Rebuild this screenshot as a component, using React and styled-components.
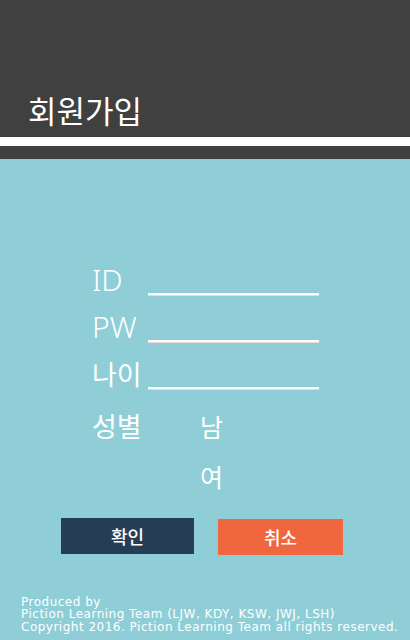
import React from "react";
import styled, { createGlobalStyle } from "styled-components";

const Global = createGlobalStyle`
  html, body { margin: 0; padding: 0; }
  body {
    width: 410px;
    height: 640px;
    overflow: hidden;
    background: #8fced6;
    font-family: "Noto Sans CJK KR", "Noto Sans", sans-serif;
  }
`;

const Page = styled.div`
  display: flex;
  flex-direction: column;
  width: 410px;
  height: 640px;
`;

const Header = styled.header`
  height: 137px;
  background: #404040;
  display: flex;
  align-items: flex-end;
  padding: 0 0 12px 28px;
  box-sizing: border-box;
`;

const Title = styled.h1`
  margin: 0;
  color: #ffffff;
  font-size: 31px;
  font-weight: 400;
  line-height: 1;
`;

const Stripe = styled.div`
  height: 9px;
  background: #ffffff;
`;

const Band = styled.div`
  height: 13px;
  background: #404040;
`;

const Main = styled.main`
  flex: 1;
  background: #8fced6;
  display: flex;
  flex-direction: column;
  padding: 97px 0 0 0;
  box-sizing: border-box;
`;

const Form = styled.form`
  display: grid;
  grid-template-columns: 56px 171px;
  grid-auto-rows: 47px;
  margin-left: 92px;
`;

const Label = styled.label`
  color: #ffffff;
  font-size: ${(p) => (p.$latin ? "30px" : "27px")};
  font-weight: ${(p) => (p.$latin ? 300 : 400)};
  line-height: 47px;
  font-family: ${(p) =>
    p.$latin ? '"Noto Sans", sans-serif' : '"Noto Sans CJK KR", sans-serif'};
`;

const Line = styled.div`
  align-self: end;
  margin-bottom: 8px;
  height: 2px;
  background: #ffffff;
  box-shadow: 0 1px 0 #e8d8d8;
`;

const GenderRow = styled.div`
  display: grid;
  grid-template-columns: 108px auto;
  margin-left: 92px;
  margin-top: 7px;
`;

const GenderLabel = styled.div`
  color: #ffffff;
  font-size: 27px;
  line-height: 44px;
`;

const Options = styled.div`
  display: flex;
  flex-direction: column;
  gap: 6px;
`;

const Option = styled.div`
  color: #ffffff;
  font-size: 25px;
  line-height: 44px;
`;

const Buttons = styled.div`
  display: flex;
  gap: 24px;
  margin: 20px 0 0 61px;
`;

const Button = styled.button`
  width: ${(p) => (p.$variant === "cancel" ? "125px" : "133px")};
  height: 36px;
  margin-top: ${(p) => (p.$variant === "cancel" ? "1px" : "0")};
  border: none;
  background: ${(p) => (p.$variant === "cancel" ? "#f0663e" : "#263d56")};
  color: #ffffff;
  font-family: "Noto Sans CJK KR", sans-serif;
  font-size: 18px;
  font-weight: 500;
  padding: 0;
`;

const Footer = styled.footer`
  margin-top: auto;
  padding: 0 0 7px 21px;
  color: #ffffff;
  font-family: "DejaVu Sans", sans-serif;
  font-size: 12px;
  line-height: 12.5px;
  letter-spacing: 0.5px;
`;

export default function App() {
  return (
    <Page>
      <Global />
      <Header>
        <Title>회원가입</Title>
      </Header>
      <Stripe />
      <Band />
      <Main>
        <Form>
          <Label $latin>ID</Label>
          <Line />
          <Label $latin>PW</Label>
          <Line />
          <Label>나이</Label>
          <Line />
        </Form>
        <GenderRow>
          <GenderLabel>성별</GenderLabel>
          <Options>
            <Option>남</Option>
            <Option>여</Option>
          </Options>
        </GenderRow>
        <Buttons>
          <Button type="button">확인</Button>
          <Button type="button" $variant="cancel">취소</Button>
        </Buttons>
        <Footer>
          Produced by
          <br />
          Piction Learning Team (LJW, KDY, KSW, JWJ, LSH)
          <br />
          Copyright 2016. Piction Learning Team all rights reserved.
        </Footer>
      </Main>
    </Page>
  );
}
